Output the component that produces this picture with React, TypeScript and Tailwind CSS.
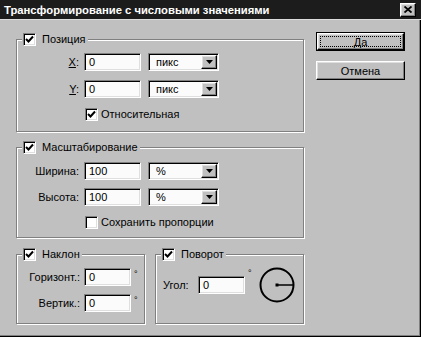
import React from 'react';

const sunken =
  'border border-t-[#808080] border-l-[#808080] border-b-white border-r-white shadow-[inset_1px_1px_0_#000,inset_-1px_-1px_0_#dfdfdf]';
const raised =
  'border border-t-white border-l-white border-b-black border-r-black shadow-[inset_-1px_-1px_0_#808080,inset_1px_1px_0_#dfdfdf]';

function Check({ checked }: { checked: boolean }) {
  return (
    <span className={`w-[13px] h-[13px] shrink-0 bg-white flex items-center justify-center ${sunken}`}>
      {checked && (
        <svg width="9" height="9" viewBox="0 0 9 9">
          <polyline points="1,4 3.5,6.5 8,1.5" fill="none" stroke="#000" strokeWidth="2" />
        </svg>
      )}
    </span>
  );
}

function Group({ title, checked, className, children }: { title: string; checked: boolean; className?: string; children: React.ReactNode }) {
  return (
    <fieldset className={`border border-[#808080] shadow-[inset_1px_1px_0_#fff,1px_1px_0_#fff] ${className ?? ''}`}>
      <legend className="ml-[5px] px-[1px] bg-[#c0c0c0] flex items-center gap-[6px] h-[13px] leading-[13px]">
        <Check checked={checked} />
        <span className="pr-[1px] whitespace-nowrap">{title}</span>
      </legend>
      {children}
    </fieldset>
  );
}

function Field({ value, w }: { value: string; w: string }) {
  return (
    <div className={`h-[18px] bg-[#fbfbfb] flex items-center pl-[4px] ${w} ${sunken}`}>{value}</div>
  );
}

function Combo({ value }: { value: string }) {
  return (
    <div className={`h-[18px] w-[71px] bg-[#fbfbfb] flex items-center ${sunken} p-[1px]`}>
      <span className="flex-1 pl-[6px]">{value}</span>
      <span className={`w-[16px] h-full bg-[#c0c0c0] flex items-center justify-center ${raised}`}>
        <svg width="7" height="4" viewBox="0 0 7 4">
          <polygon points="0,0 7,0 3.5,4" fill="#000" />
        </svg>
      </span>
    </div>
  );
}

function Deg() {
  return <span className="self-start text-[9px] leading-[9px] ml-[3px] mt-[2px]">°</span>;
}

export default function App() {
  return (
    <div className="w-[421px] h-[337px] bg-[#c0c0c0] flex flex-col text-[11px] leading-[14px] text-black font-['Liberation_Sans',Arial,sans-serif] shadow-[inset_-1px_-1px_0_#000,inset_-2px_-2px_0_#808080] select-none">
      {/* title bar */}
      <div className="h-[20px] bg-[#1c1c1c] flex items-center justify-between pl-[4px] pr-[5px] border-b border-[#dcdcdc]">
        <span className="text-white font-bold text-[11.25px]">Трансформирование с числовыми значениями</span>
        <span className={`w-[16px] h-[14px] bg-[#c0c0c0] flex items-center justify-center ${raised}`}>
          <svg width="8" height="7" viewBox="0 0 8 7">
            <path d="M0.5 0.5 L7.5 6.5 M7.5 0.5 L0.5 6.5" stroke="#000" strokeWidth="1.8" />
          </svg>
        </span>
      </div>

      <div className="flex pl-[16px] gap-[12px]">
        {/* left column */}
        <div className="w-[288px] mt-[13px] flex flex-col">
          <Group title="Позиция" checked>
            <div className="pt-[7px] pb-[10px] flex flex-col">
              <div className="flex items-center">
                <span className="w-[62px] text-right"><span className="underline">X</span>:</span>
                <span className="ml-[5px]"><Field value="0" w="w-[57px]" /></span>
                <span className="ml-[7px]"><Combo value="пикс" /></span>
              </div>
              <div className="flex items-center mt-[9px]">
                <span className="w-[62px] text-right"><span className="underline">Y</span>:</span>
                <span className="ml-[5px]"><Field value="0" w="w-[57px]" /></span>
                <span className="ml-[7px]"><Combo value="пикс" /></span>
              </div>
              <div className="flex items-center mt-[9px] pl-[68px] gap-[3px]">
                <Check checked />
                <span>Относительная</span>
              </div>
            </div>
          </Group>

          <Group title="Масштабирование" checked className="mt-[9px]">
            <div className="pt-[8px] pb-[8px] flex flex-col">
              <div className="flex items-center">
                <span className="w-[62px] text-right">Ширина:</span>
                <span className="ml-[5px]"><Field value="100" w="w-[57px]" /></span>
                <span className="ml-[7px]"><Combo value="%" /></span>
              </div>
              <div className="flex items-center mt-[8px]">
                <span className="w-[62px] text-right">Высота:</span>
                <span className="ml-[5px]"><Field value="100" w="w-[57px]" /></span>
                <span className="ml-[7px]"><Combo value="%" /></span>
              </div>
              <div className="flex items-center mt-[9px] pl-[68px] gap-[3px]">
                <Check checked={false} />
                <span className="whitespace-nowrap">Сохранить пропорции</span>
              </div>
            </div>
          </Group>

          <div className="flex gap-[10px] mt-[10px]">
            <Group title="Наклон" checked className="w-[129px]">
              <div className="pt-[7px] pb-[11px] flex flex-col">
                <div className="flex items-center">
                  <span className="w-[63px] text-right">Горизонт.:</span>
                  <span className="ml-[4px]"><Field value="0" w="w-[47px]" /></span>
                  <Deg />
                </div>
                <div className="flex items-center mt-[8px]">
                  <span className="w-[63px] text-right">Вертик.:</span>
                  <span className="ml-[4px]"><Field value="0" w="w-[47px]" /></span>
                  <Deg />
                </div>
              </div>
            </Group>
            <Group title="Поворот" checked className="flex-1">
              <div className="pt-[6px] pl-[7px] flex items-center">
                <span className="w-[35px]">Угол:</span>
                <Field value="0" w="w-[47px]" />
                <Deg />
                <svg width="36" height="36" viewBox="0 0 36 36" className="ml-[7px]">
                  <circle cx="18" cy="18" r="16.5" fill="none" stroke="#000" strokeWidth="2" />
                  <line x1="18" y1="18" x2="34" y2="18" stroke="#000" strokeWidth="1.5" />
                  <rect x="16.5" y="16.5" width="3" height="3" fill="#000" />
                </svg>
              </div>
            </Group>
          </div>
        </div>

        {/* buttons */}
        <div className="mt-[12px] flex flex-col">
          <div className="w-[89px] h-[19px] border border-black">
            <div className={`h-full w-full p-[2px] ${raised}`}>
              <div className="h-full w-full border border-dotted border-black flex items-center justify-center">Да</div>
            </div>
          </div>
          <div className={`w-[89px] h-[19px] mt-[10px] flex items-center justify-center ${raised}`}>Отмена</div>
        </div>
      </div>
    </div>
  );
}
